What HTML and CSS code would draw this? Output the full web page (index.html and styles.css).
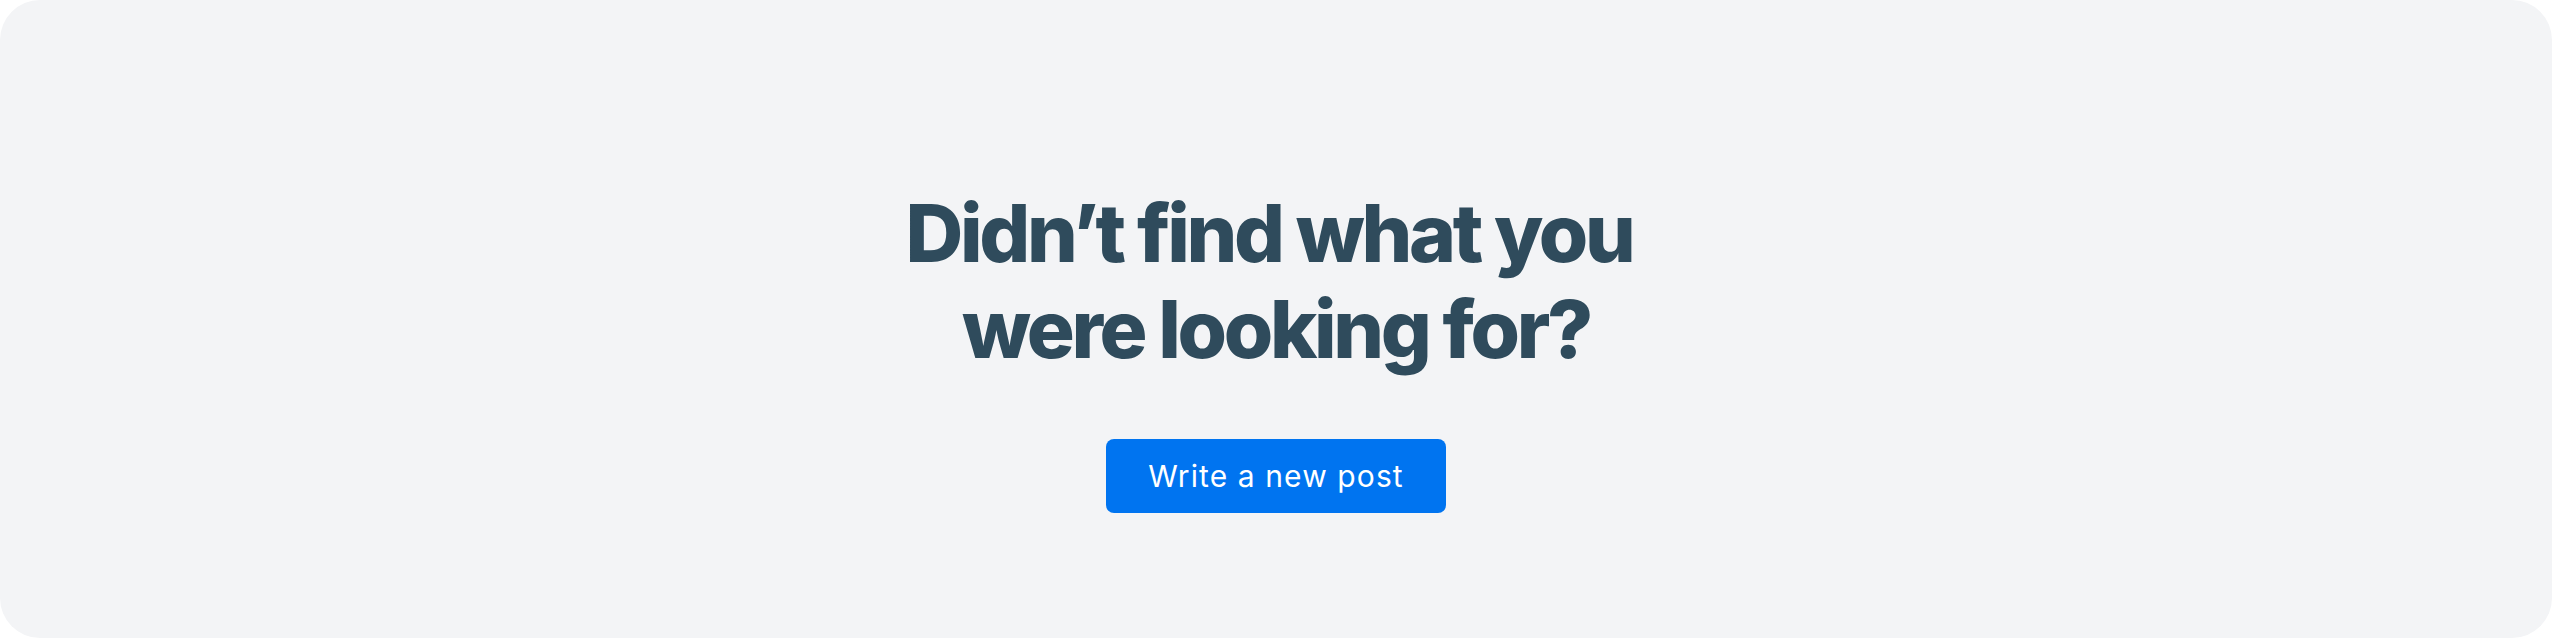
FILE: index.html
```html
<!DOCTYPE html>
<html lang="en">
<head>
<meta charset="utf-8">
<title>Didn’t find what you were looking for?</title>
<link rel="stylesheet" href="styles.css">
</head>
<body>
<main class="panel">
  <section class="cta">
    <h2 class="cta-title">Didn’t find what you&nbsp;<br>were looking for?</h2>
    <a class="cta-button" href="#">Write a new post</a>
  </section>
</main>
</body>
</html>
```
FILE: styles.css
```css
html, body {
  margin: 0;
  padding: 0;
  background: #ffffff;
}
.panel {
  width: 2552px;
  height: 638px;
  box-sizing: border-box;
  background: #f3f4f6;
  border-radius: 40px;
  display: flex;
  justify-content: center;
  padding-top: 185px;
}
.cta {
  display: flex;
  flex-direction: column;
  align-items: center;
}
.cta-title {
  margin: 0;
  font-family: Inter, "Liberation Sans", sans-serif;
  font-weight: 800;
  font-size: 80px;
  line-height: 96px;
  letter-spacing: -0.042em;
  color: #2f4b5c;
  text-align: center;
}
.cta-button {
  margin-top: 62px;
  width: 340px;
  height: 74px;
  box-sizing: border-box;
  display: flex;
  align-items: center;
  justify-content: center;
  background: #0074f0;
  color: #ffffff;
  border-radius: 8px;
  font-family: Inter, "Liberation Sans", sans-serif;
  font-size: 30px;
  font-weight: 400;
  letter-spacing: 1.1px;
  text-decoration: none;
}
```
